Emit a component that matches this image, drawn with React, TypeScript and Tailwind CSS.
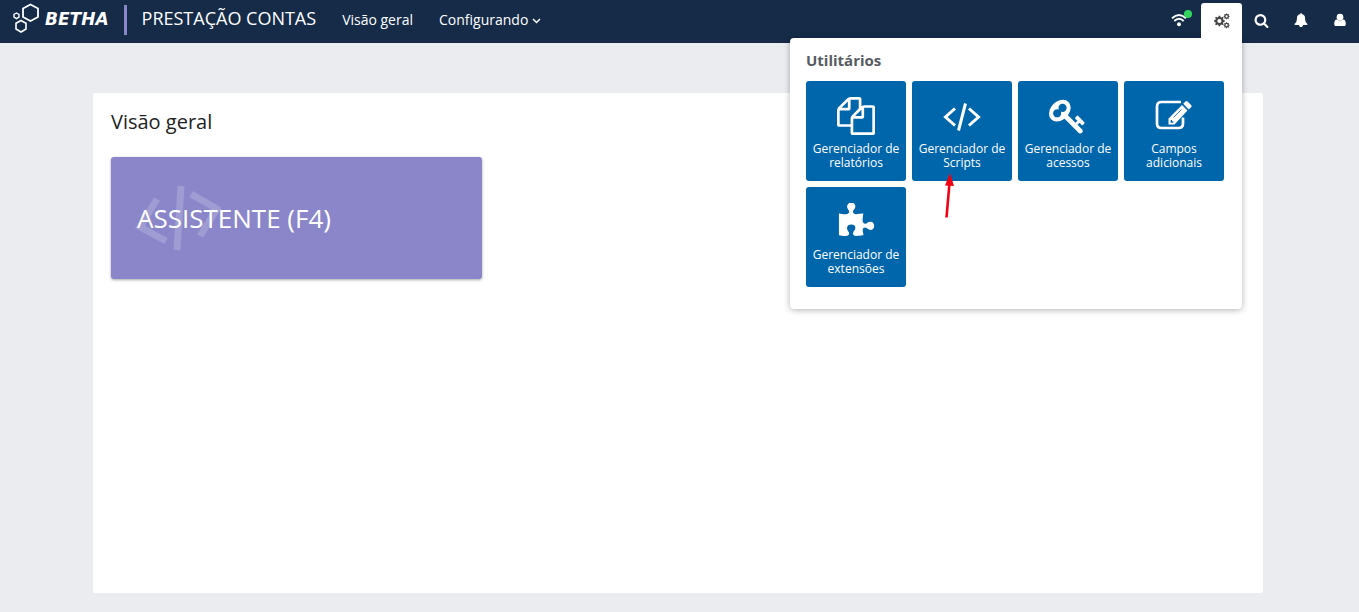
import React from 'react'

const FONT = "font-['Open_Sans','Noto_Sans',sans-serif]"

// Outline of a gear centred on (cx, cy)
const gearPath = (cx: number, cy: number, outer: number, inner: number, teeth: number) => {
  const step = (Math.PI * 2) / teeth
  const points: string[] = []
  for (let i = 0; i < teeth; i++) {
    const a = i * step
    const corners = [
      [inner, -0.3],
      [outer, -0.2],
      [outer, 0.2],
      [inner, 0.3],
    ]
    corners.forEach(([r, t]) => {
      points.push(`${cx + r * Math.cos(a + t * step)} ${cy + r * Math.sin(a + t * step)}`)
    })
  }
  return `M${points.join('L')}Z`
}

const hole = (cx: number, cy: number, r: number) =>
  `M${cx - r} ${cy}a${r} ${r} 0 1 0 ${r * 2} 0a${r} ${r} 0 1 0 ${-r * 2} 0Z`

const CogsIcon = () => (
  <svg width="16" height="16" viewBox="0 0 16 16" fill="currentColor" fillRule="evenodd" aria-hidden="true">
    <path d={gearPath(5.4, 8, 5.4, 4.2, 8) + hole(5.4, 8, 2.1)} />
    <path d={gearPath(12.6, 3.4, 3, 2.4, 8) + hole(12.6, 3.4, 1.1)} />
    <path d={gearPath(12.6, 12.2, 3, 2.4, 8) + hole(12.6, 12.2, 1.1)} />
  </svg>
)

const WifiIcon = () => (
  <svg width="16" height="14" viewBox="0 0 16 14" fill="none" stroke="currentColor" strokeWidth="1.9" aria-hidden="true">
    <path d="M1 5.2Q8 -1.4 15 5.2" />
    <path d="M3.3 8Q8 3.6 12.7 8" />
    <circle cx="8" cy="11.2" r="2" fill="currentColor" stroke="none" />
  </svg>
)

const SearchIcon = () => (
  <svg width="15" height="15" viewBox="0 0 1792 1792" fill="currentColor" aria-hidden="true">
    <path d="M1216 832q0-185-131.5-316.5t-316.5-131.5-316.5 131.5-131.5 316.5 131.5 316.5 316.5 131.5 316.5-131.5 131.5-316.5zm512 832q0 52-38 90t-90 38q-54 0-90-38l-343-342q-179 124-399 124-143 0-273.5-55.5t-225-150-150-225-55.5-273.5 55.5-273.500 150-225 225-150 273.500-55.500 273.500 55.500 225 150 150 225 55.500 273.500q0 220-124 399l343 343q37 37 37 90z" />
  </svg>
)

const BellIcon = () => (
  <svg width="14" height="14" viewBox="0 0 1792 1792" fill="currentColor" aria-hidden="true">
    <path d="M1728 1408q0 52-38 90t-90 38h-448q0 106-75 181t-181 75-181-75-75-181h-448q-52 0-90-38t-38-90q50-42 91-88t85-119.500 74.500-158.500 50-206 19.500-260q0-152 117-282.500t307-158.500q-8-19-8-39 0-40 28-68t68-28 68 28 28 68q0 20-8 39 190 28 307 158.500t117 282.500q0 139 19.500 260t50 206 74.500 158.500 85 119.500 91 88z" />
  </svg>
)

const UserIcon = () => (
  <svg width="14" height="14" viewBox="0 0 1792 1792" fill="currentColor" aria-hidden="true">
    <path d="M1636 1399q0 109-62.5 187t-150.5 78h-1054q-88 0-150.5-78t-62.5-187q0-85 8.5-160.500t31.5-152 58.5-131 94-89 134.500-34.500q131 128 413 128t413-128q76 0 134.500 34.500t94 89 58.500 131 31.500 152 8.500 160.500z" />
    <circle cx="896" cy="540" r="430" />
  </svg>
)

const FilesIcon = () => (
  <svg width="38" height="38" viewBox="0 0 1792 1792" fill="currentColor" aria-hidden="true">
    <path d="M1696 384q40 0 68 28t28 68v1216q0 40-28 68t-68 28h-960q-40 0-68-28t-28-68v-288h-544q-40 0-68-28t-28-68v-672q0-40 20-88t48-76l408-408q28-28 76-48t88-20h416q40 0 68 28t28 68v328q68-40 128-40h416zm-544 213l-299 299h299v-299zm-640-384l-299 299h299v-299zm196 647l316-316v-416h-384v416q0 40-28 68t-68 28h-416v640h512v-256q0-40 20-88t48-76zm956 804v-1152h-384v416q0 40-28 68t-68 28h-416v640h896z" />
  </svg>
)

const CodeIcon = () => (
  <svg width="38" height="38" viewBox="0 0 38 38" fill="none" stroke="currentColor" strokeWidth="3" aria-hidden="true">
    <path d="M12 11.500L2.500 20L12 28.500M26 11.500L35.500 20L26 28.500M22.500 6.500L15.500 33.500" />
  </svg>
)

const KeyIcon = () => (
  <svg width="38" height="38" viewBox="0 0 1792 1792" fill="currentColor" aria-hidden="true">
    <path d="M832 512q0-80-56-136t-136-56-136 56-56 136q0 42 19 83-41-19-83-19-80 0-136 56t-56 136 56 136 136 56 136-56 56-136q0-42-19-83 41 19 83 19 80 0 136-56t56-136zm851 704q0 17-49 66t-66 49q-9 0-28.500-16t-36.500-33-38.500-40-24.500-26l-96 96 220 220q28 28 28 68 0 42-39 81t-81 39q-40 0-68-28l-671-671q-176 131-365 131-163 0-265.500-102.500t-102.500-265.500q0-160 95-313t248-248 313-95q163 0 265.500 102.500t102.500 265.500q0 189-131 365l355 355 96-96q-3-3-26-24.500t-40-38.500-33-36.500-16-28.500q0-17 49-66t66-49q13 0 23 10 6 6 46 44.500t82 79.500 86.500 86 73 78 28.500 41z" />
  </svg>
)

const EditIcon = () => (
  <svg width="38" height="38" viewBox="0 0 38 38" fill="none" aria-hidden="true">
    <path
      d="M26 5H6.500Q2 5 2 9.500V26.500Q2 31 6.500 31H23.500Q28 31 28 26.500V20.500"
      stroke="currentColor"
      strokeWidth="2.700"
    />
    <path
      d="M13.500 27.500V21.500L27 8L32.500 13.500L19.500 27.500ZM15.700 23V25.700H18.300V24.300H17V23ZM28.200 6.800L30.500 4.500Q31.500 3.500 32.600 4.500L36.300 8.200Q37.200 9.200 36.300 10.100L33.800 12.500Z"
      fill="currentColor"
      fillRule="evenodd"
    />
    <path d="M18.500 20.500L26.500 12.500" stroke="#0066ab" strokeWidth="0.800" />
  </svg>
)

const PuzzleIcon = () => (
  <svg width="38" height="38" viewBox="0 0 1792 1792" fill="currentColor" aria-hidden="true">
    <path d="M1755 1083q0 81-44.500 135t-123.500 54q-41 0-77.500-17.500t-59-38-56.500-38-71-17.500q-110 0-110 124 0 39 16 115t15 115v5q-22 0-33 1-34 3-97.500 11.500t-115.500 13.500-98 5q-61 0-103-26.500t-42-83.500q0-37 17.500-71t38-56.500 38-59 17.500-77.500q0-79-54-123.500t-135-44.500q-84 0-143 45.500t-59 127.500q0 43 15 83t33.500 64.500 33.500 53 15 50.500q0 45-46 89-37 35-117 35-95 0-245-24-9-2-27.500-4t-27.500-4l-13-2q-1 0-3-1-2 0-2-1v-1024q2 1 17.500 3.500t34 5 21.500 3.500q150 24 245 24 80 0 117-35 46-44 46-89 0-22-15-50.500t-33.500-53-33.500-64.500-15-83q0-82 59-127.500t144-45.500q80 0 134 44.500t54 123.500q0 41-17.500 77.500t-38 59-38 56.500-17.500 71q0 57 42 83.500t103 26.500q64 0 180-15t163-17v2q-1 2-3.500 17.500t-5 34-3.500 21.500q-24 150-24 245 0 80 35 117 44 46 89 46 22 0 50.500-15t53-33.500 64.500-33.500 83-15q82 0 127.500 59t45.500 143z" />
  </svg>
)

const LogoMark = () => (
  <svg width="28" height="32" viewBox="0 0 28 32" fill="none" stroke="currentColor" strokeWidth="1.800" aria-hidden="true">
    <path d="M17.500 1.500L25 5.500V14L17.500 18L10 14V5.500Z" />
    <path d="M8 17.500L13 20.300V26L8 29L3 26V20.300Z" strokeWidth="1.600" />
    <path d="M3.500 10L6 11.400V14.200L3.500 15.600L1 14.200V11.400Z" strokeWidth="1.400" />
  </svg>
)

const utilities = [
  { label: 'Gerenciador de relatórios', Icon: FilesIcon },
  { label: 'Gerenciador de Scripts', Icon: CodeIcon, highlighted: true },
  { label: 'Gerenciador de acessos', Icon: KeyIcon },
  { label: 'Campos adicionais', Icon: EditIcon },
  { label: 'Gerenciador de extensões', Icon: PuzzleIcon },
]

const UtilitiesMenu = () => (
  <section className="absolute right-0 top-full z-10 w-[452px] rounded-b rounded-tl bg-white px-4 pt-3 pb-[22px] text-left shadow-[0_1px_6px_rgba(0,0,0,0.3)]">
    <h2 className="mb-[11px] text-[15px] leading-5 font-bold text-[#555b61]">Utilitários</h2>
    <div className="flex flex-wrap gap-[6px]">
      {utilities.map(({ label, Icon, highlighted }) => (
        <a
          key={label}
          href="#"
          className="relative flex size-[100px] flex-col items-center rounded-[3px] bg-[#0066ab] px-1 pt-4 text-center text-xs leading-[14px] text-white hover:bg-[#00558f]"
        >
          <Icon />
          <span className="mt-[7px]">{label}</span>
          {highlighted && (
            <svg className="absolute top-[92px] left-[30px]" width="14" height="46" viewBox="0 0 14 46" aria-hidden="true">
              <path d="M4.500 44.500L7.500 10" stroke="#f00010" strokeWidth="2.600" />
              <path d="M8 0L12 13L3 12.500Z" fill="#f00010" />
            </svg>
          )}
        </a>
      ))}
    </div>
  </section>
)

const Header = () => (
  <header className="flex h-[43px] items-start bg-[#152b48] text-white">
    <a href="#" className="flex h-[38px] items-center pl-[13px]" aria-label="Betha">
      <LogoMark />
      <span className="ml-1 font-['DejaVu_Sans',sans-serif] text-[17px] leading-6 font-bold italic">BETHA</span>
    </a>
    <div className="mt-[5px] ml-[15px] h-[30px] w-[3px] bg-[#8a86c9]"></div>
    <h1 className="ml-[15px] text-lg leading-9">PRESTAÇÃO CONTAS</h1>

    <nav className="flex text-sm leading-10">
      <a href="#" className="ml-[26px]">Visão geral</a>
      <button type="button" className="ml-[26px] flex items-center">
        Configurando
        <svg className="mt-px ml-1" width="9" height="6" viewBox="0 0 9 6" fill="none" stroke="currentColor" strokeWidth="1.500" aria-hidden="true">
          <path d="M1 1L4.500 4.500L8 1" />
        </svg>
      </button>
    </nav>

    <div className="ml-auto flex items-start">
      <button type="button" aria-label="Conexão" className="relative flex h-10 w-11 items-center justify-center">
        <WifiIcon />
        <span className="absolute top-[10px] right-[9px] size-2 rounded-full bg-[#33d45c]"></span>
      </button>
      <div className="relative mt-[3px]">
        <button
          type="button"
          aria-label="Utilitários"
          aria-expanded="true"
          className="relative z-20 flex h-[35px] w-[41px] items-center justify-center rounded-t-[3px] bg-white text-[#444]"
        >
          <CogsIcon />
        </button>
        <UtilitiesMenu />
      </div>
      <button type="button" aria-label="Pesquisar" className="flex h-10 w-[39px] items-center justify-center">
        <SearchIcon />
      </button>
      <button type="button" aria-label="Notificações" className="flex h-10 w-[39px] items-center justify-center">
        <BellIcon />
      </button>
      <button type="button" aria-label="Usuário" className="flex h-10 w-[39px] items-center justify-center">
        <UserIcon />
      </button>
    </div>
  </header>
)

const AssistantCard = () => (
  <a
    href="#"
    className="relative flex h-[122px] items-center rounded-[3px] bg-[#8a86c9] px-[26px] text-[26px] text-white shadow-[0_1px_3px_rgba(0,0,0,0.35)]"
  >
    <svg
      className="absolute top-[26px] left-6"
      width="86"
      height="70"
      viewBox="0 0 86 70"
      fill="none"
      stroke="#9f9bd3"
      strokeWidth="7"
      aria-hidden="true"
    >
      <path d="M22 16L5 44L31 58M46 3L42 67M56 11L82 26L65 53" />
    </svg>
    <span className="relative">ASSISTENTE (F4)</span>
  </a>
)

const App = () => {
  return (
    <div className={`min-h-screen bg-[#ebecf0] ${FONT}`}>
      <Header />

      <main className="pt-[50px] pr-[3px] pb-[19px]">
        <div className="mx-auto min-h-[500px] max-w-[1170px] rounded-xs bg-white px-[18px] pt-4">
          <h2 className="text-xl leading-[26px] text-[#222]">Visão geral</h2>
          <div className="mt-[22px] grid grid-cols-3 gap-[10px]">
            <AssistantCard />
          </div>
        </div>
      </main>
    </div>
  )
}

export default App
